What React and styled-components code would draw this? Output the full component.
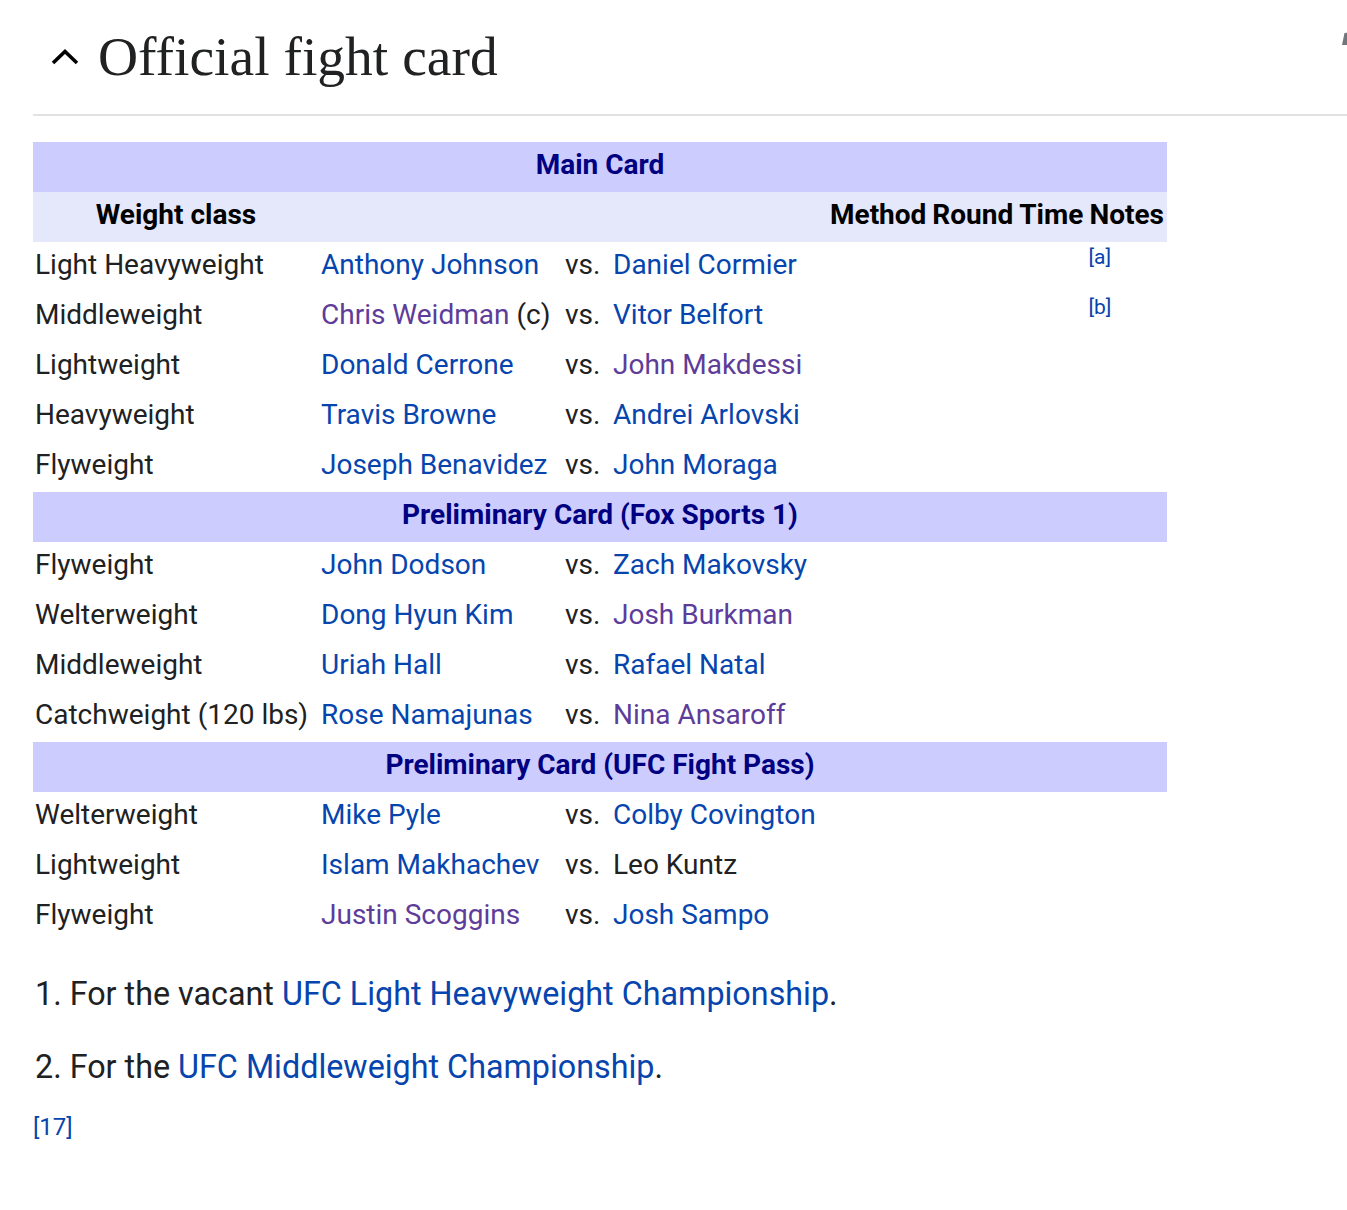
import React from "react";
import styled, { createGlobalStyle } from "styled-components";

const GlobalStyle = createGlobalStyle`
  html, body { margin: 0; padding: 0; background: #ffffff; }
  body { overflow: hidden; font-family: Roboto, "Liberation Sans", sans-serif; color: #202122; }
`;

const Page = styled.div`
  padding-left: 33px;
  overflow: hidden;
`;

const HeadingRow = styled.div`
  display: flex;
  align-items: center;
  height: 114px;
  border-bottom: 2px solid #e2e2e2;
`;

const Chevron = styled.svg`
  width: 30px;
  height: 20px;
  margin-left: 17px;
  margin-right: 18px;
  flex: none;
`;

const Title = styled.h2`
  margin: 0;
  font-family: "Liberation Serif", "DejaVu Serif", serif;
  font-weight: 400;
  font-size: 55.5px;
  line-height: 1;
  color: #202122;
`;

const EditIcon = styled.svg`
  align-self: flex-start;
  margin-top: 32px;
  margin-left: auto;
  margin-right: -14px;
  width: 20px;
  height: 14px;
  flex: none;
`;

const Table = styled.table`
  margin-top: 26px;
  border-collapse: collapse;
  border-spacing: 0;
  font-size: 28px;
`;

const SectionHead = styled.th`
  background: #ccccff;
  color: #000080;
  font-weight: 700;
  font-size: 28px;
  height: 44px;
  padding: 0 3px 6px;
  text-align: center;
`;

const ColHead = styled.th`
  background: #e5e7fa;
  color: #000000;
  font-weight: 700;
  font-size: 28px;
  height: 44px;
  padding: 0 3px 6px;
  text-align: center;
  white-space: nowrap;
`;

const Cell = styled.td`
  height: 44px;
  padding: 0 2px 6px;
  white-space: nowrap;
  vertical-align: middle;
  text-align: left;
`;

const NoteCell = styled.td`
  height: 45px;
  padding: 5px 2px 0;
  vertical-align: top;
  text-align: left;
  font-size: 21px;
  line-height: 1;
`;

const Link = styled.a`
  color: ${(p) => (p.$visited ? "#5e3c99" : "#0645ad")};
  text-decoration: none;
`;

const Sup = styled.a`
  color: #0645ad;
  text-decoration: none;
`;

const Notes = styled.div`
  display: flex;
  flex-direction: column;
  gap: 25px;
  margin-top: 28px;
  font-size: 32.3px;
  line-height: 48px;
  padding-left: 2px;
`;

const Ref = styled.a`
  display: block;
  margin-top: 18px;
  font-size: 24px;
  line-height: 36px;
  color: #0645ad;
  text-decoration: none;
`;

const sections = [
  {
    title: "Main Card",
    rows: [
      ["Light Heavyweight", ["Anthony Johnson"], ["Daniel Cormier"], "a"],
      ["Middleweight", ["Chris Weidman", true, " (c)"], ["Vitor Belfort"], "b"],
      ["Lightweight", ["Donald Cerrone"], ["John Makdessi", true]],
      ["Heavyweight", ["Travis Browne"], ["Andrei Arlovski"]],
      ["Flyweight", ["Joseph Benavidez"], ["John Moraga"]],
    ],
  },
  {
    title: "Preliminary Card (Fox Sports 1)",
    rows: [
      ["Flyweight", ["John Dodson"], ["Zach Makovsky"]],
      ["Welterweight", ["Dong Hyun Kim"], ["Josh Burkman", true]],
      ["Middleweight", ["Uriah Hall"], ["Rafael Natal"]],
      ["Catchweight (120 lbs)", ["Rose Namajunas"], ["Nina Ansaroff", true]],
    ],
  },
  {
    title: "Preliminary Card (UFC Fight Pass)",
    rows: [
      ["Welterweight", ["Mike Pyle"], ["Colby Covington"]],
      ["Lightweight", ["Islam Makhachev"], ["Leo Kuntz", false, "", true]],
      ["Flyweight", ["Justin Scoggins", true], ["Josh Sampo"]],
    ],
  },
];

function Fighter({ data }) {
  const [name, visited, suffix, plain] = data;
  return (
    <>
      {plain ? name : <Link href="#" $visited={visited}>{name}</Link>}
      {suffix || null}
    </>
  );
}

export default function App() {
  return (
    <Page>
      <GlobalStyle />
      <HeadingRow>
        <Chevron viewBox="0 0 30 20">
          <path d="M3 16 L15 4.5 L27 16" fill="none" stroke="#000" strokeWidth="3.6" />
        </Chevron>
        <Title>Official fight card</Title>
        <EditIcon viewBox="0 0 20 14">
          <polygon points="1,13 3.5,1 20,0 20,13" fill="#72777d" />
        </EditIcon>
      </HeadingRow>
      <Table>
        <colgroup>
          <col style={{ width: 286 }} />
          <col style={{ width: 244 }} />
          <col style={{ width: 48 }} />
          <col style={{ width: 216 }} />
        </colgroup>
        <tbody>
          {sections.map((s, si) => (
            <React.Fragment key={s.title}>
              <tr>
                <SectionHead colSpan={8}>{s.title}</SectionHead>
              </tr>
              {si === 0 && (
                <tr>
                  <ColHead>Weight class</ColHead>
                  <ColHead />
                  <ColHead />
                  <ColHead />
                  <ColHead>Method</ColHead>
                  <ColHead>Round</ColHead>
                  <ColHead>Time</ColHead>
                  <ColHead>Notes</ColHead>
                </tr>
              )}
              {s.rows.map((r, ri) => (
                <tr key={ri}>
                  <Cell>{r[0]}</Cell>
                  <Cell><Fighter data={r[1]} /></Cell>
                  <Cell>vs.</Cell>
                  <Cell><Fighter data={r[2]} /></Cell>
                  <Cell />
                  <Cell />
                  <Cell />
                  <NoteCell>{r[3] ? <Sup href="#">[{r[3]}]</Sup> : null}</NoteCell>
                </tr>
              ))}
            </React.Fragment>
          ))}
        </tbody>
      </Table>
      <Notes>
        <div>1. For the vacant <Link href="#">UFC Light Heavyweight Championship</Link>.</div>
        <div>2. For the <Link href="#">UFC Middleweight Championship</Link>.</div>
      </Notes>
      <Ref href="#">[17]</Ref>
    </Page>
  );
}
